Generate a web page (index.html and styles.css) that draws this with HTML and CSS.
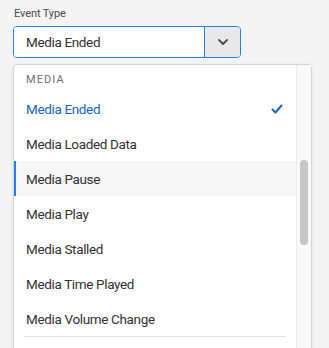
FILE: index.html
```html
<!DOCTYPE html>
<html lang="en">
<head>
    <meta charset="UTF-8">
    <title>Event Type</title>
    <link rel="stylesheet" href="styles.css">
</head>
<body>
    <div class="field">
        <label class="field-label">Event Type</label>
        <div class="picker">
            <div class="picker-value">Media Ended</div>
            <div class="picker-btn">
                <svg width="10" height="6" viewBox="0 0 10 6"><path d="M1 1 L5 5 L9 1" fill="none" stroke="#4b4b4b" stroke-width="1.8" stroke-linecap="round" stroke-linejoin="round"/></svg>
            </div>
        </div>
        <div class="popover">
            <div class="menu">
                <div class="menu-heading">Media</div>
                <div class="menu-item selected">
                    <span>Media Ended</span>
                    <svg width="12" height="10" viewBox="0 0 12 10"><path d="M1.5 5.5 L4.5 8.5 L10.5 1.5" fill="none" stroke="#1266d4" stroke-width="2" stroke-linecap="round" stroke-linejoin="round"/></svg>
                </div>
                <div class="menu-item">Media Loaded Data</div>
                <div class="menu-item focused">Media Pause</div>
                <div class="menu-item">Media Play</div>
                <div class="menu-item">Media Stalled</div>
                <div class="menu-item">Media Time Played</div>
                <div class="menu-item">Media Volume Change</div>
                <div class="menu-divider"></div>
            </div>
            <div class="scroll-track">
                <div class="scroll-thumb"></div>
            </div>
        </div>
    </div>
</body>
</html>
```

FILE: styles.css
```css
body {
    margin: 0;
    background-color: #f4f4f4;
    font-family: Roboto, Arial, sans-serif;
    color: #323232;
    overflow: hidden;
}
.field {
    padding: 6px 13px 0;
}
.field-label {
    display: block;
    font-size: 11px;
    line-height: 16px;
    color: #4b4b4b;
    margin-bottom: 4px;
    padding-left: 1px;
    letter-spacing: -0.1px;
}
.picker {
    display: flex;
    width: 228px;
    height: 32px;
    box-sizing: border-box;
    border: 1px solid #2680eb;
    border-radius: 4px;
    overflow: hidden;
}
.picker-value {
    flex: 1;
    background-color: #ffffff;
    padding-left: 12px;
    font-size: 13.5px;
    letter-spacing: -0.35px;
    line-height: 30px;
}
.picker-btn {
    width: 35px;
    background-color: #e8e8e8;
    border-left: 1px solid #2680eb;
    display: flex;
    align-items: center;
    justify-content: center;
}
.popover {
    display: flex;
    width: 299px;
    height: 300px;
    box-sizing: border-box;
    margin-top: 6px;
    background-color: #ffffff;
    border: 1px solid #d6d6d6;
    border-radius: 4px;
    box-shadow: 0 1px 4px rgba(0, 0, 0, 0.08);
}
.menu {
    flex: 1;
    padding-top: 4px;
}
.menu-heading {
    height: 22px;
    line-height: 22px;
    padding-left: 12px;
    font-size: 11px;
    letter-spacing: 1.1px;
    text-transform: uppercase;
    color: #707070;
}
.menu-item {
    display: flex;
    align-items: center;
    justify-content: space-between;
    height: 35px;
    padding: 0 13px 0 12px;
    font-size: 13.5px;
    letter-spacing: -0.35px;
}
.menu-item.selected {
    color: #1266d4;
}
.menu-item.focused {
    background-color: #f6f6f7;
    box-shadow: inset 2px 0 0 #2680eb;
}
.menu-divider {
    height: 1px;
    background-color: #e6e6e6;
    margin: 0 10px;
}
.scroll-track {
    width: 14px;
    background-color: #f9f9f9;
    border-left: 1px solid #ececec;
    padding-top: 95px;
    display: flex;
    justify-content: center;
}
.scroll-thumb {
    width: 8px;
    height: 85px;
    border-radius: 4px;
    background-color: #c6c6c6;
}
```
